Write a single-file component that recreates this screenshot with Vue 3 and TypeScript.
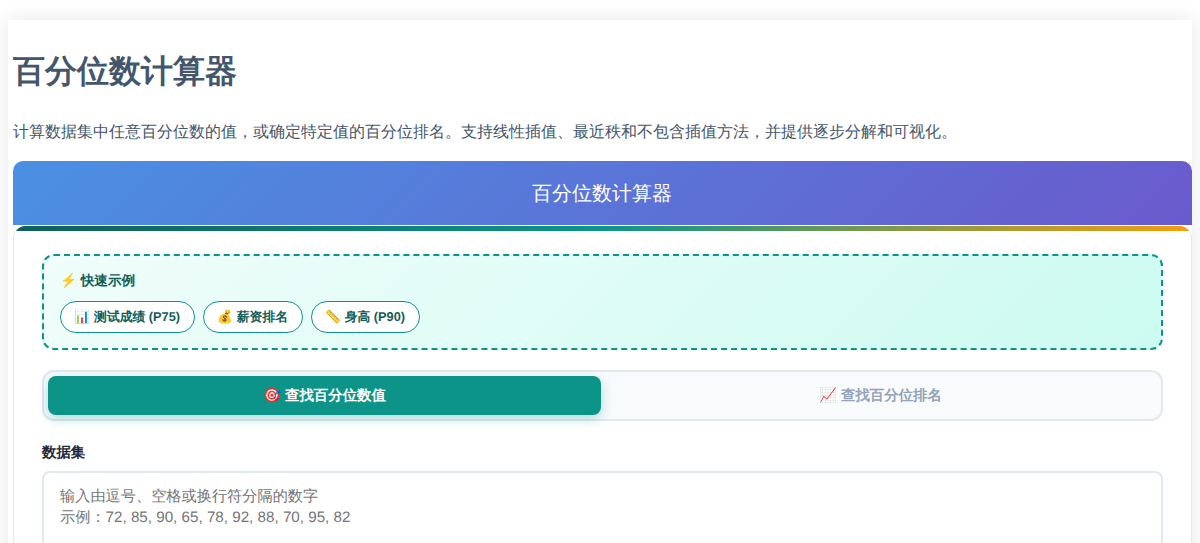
<script setup lang="ts">
import { ref } from 'vue'

type Mode = 'value' | 'rank'

const mode = ref<Mode>('value')
const data = ref('')
const examples: string[] = ['📊 测试成绩 (P75)', '💰 薪资排名', '📏 身高 (P90)']
const placeholder = '输入由逗号、空格或换行符分隔的数字\n示例：72, 85, 90, 65, 78, 92, 88, 70, 95, 82'
</script>

<template>
  <div class="page">
    <main class="container">
      <h1 class="title">百分位数计算器</h1>
      <p class="intro">计算数据集中任意百分位数的值，或确定特定值的百分位排名。支持线性插值、最近秩和不包含插值方法，并提供逐步分解和可视化。</p>
      <header class="banner">百分位数计算器</header>
      <section class="card">
        <div class="examples">
          <div class="examples-title">⚡ 快速示例</div>
          <div class="chips">
            <button v-for="e in examples" :key="e" class="chip" type="button">{{ e }}</button>
          </div>
        </div>
        <div class="tabs">
          <button class="tab" :class="{ active: mode === 'value' }" type="button" @click="mode = 'value'">🎯 查找百分位数值</button>
          <button class="tab" :class="{ active: mode === 'rank' }" type="button" @click="mode = 'rank'">📈 查找百分位排名</button>
        </div>
        <label class="label" for="dataset">数据集</label>
        <textarea id="dataset" v-model="data" class="input" :placeholder="placeholder"></textarea>
      </section>
    </main>
  </div>
</template>

<style>
html, body {
  margin: 0;
  background: #fff;
  overflow: hidden;
}
</style>

<style scoped>
.page {
  padding: 20px 8px 0;
  font-family: "Liberation Sans", sans-serif;
  text-rendering: geometricPrecision;
}
.container {
  background: #fff;
  padding: 0 0 20px 5px;
  box-shadow: 0 0 20px rgba(0, 0, 0, 0.1);
}
.title {
  margin: 0;
  padding-top: 29px;
  font-size: 32px;
  line-height: 44px;
  font-weight: 700;
  color: #44566c;
}
.intro {
  margin: 28px 0 0;
  font-size: 16px;
  line-height: 24px;
  color: #44566c;
}
.banner {
  box-sizing: border-box;
  margin-top: 16px;
  height: 64px;
  padding: 1px 1px 0 0;
  line-height: 64px;
  text-align: center;
  font-size: 20px;
  color: #fff;
  border-radius: 10px 10px 0 0;
  background: linear-gradient(135deg, #4a90e2, #6a5acd);
}
.card {
  position: relative;
  margin-top: 1px;
  padding: 28px 28px 28px;
  background: #fff;
  border: 1px solid #e2e8f0;
  border-top: 0;
  border-radius: 12px;
  overflow: hidden;
}
.card::before {
  content: "";
  position: absolute;
  top: 0;
  left: 0;
  right: 0;
  height: 5px;
  background: linear-gradient(90deg, #115e59, #0d9488, #f59e0b);
}
.examples {
  padding: 16px 16px 15px;
  border: 2px dashed #0d9488;
  border-radius: 12px;
  background: linear-gradient(135deg, #f0fdfa, #ccfbf1);
}
.examples-title {
  font-size: 13.6px;
  line-height: 18px;
  font-weight: 700;
  color: #115e59;
}
.chips {
  display: flex;
  gap: 8px;
  margin-top: 11px;
}
.chip {
  height: 32px;
  padding: 0 13.6px;
  font: 700 12.8px "Liberation Sans", sans-serif;
  text-rendering: geometricPrecision;
  color: #115e59;
  background: #fff;
  border: 1px solid #0d9488;
  border-radius: 20px;
}
.tabs {
  display: flex;
  gap: 3px;
  margin-top: 20px;
  padding: 4px;
  background: #f8fafc;
  border: 2px solid #e2e8f0;
  border-radius: 12px;
}
.tab {
  flex: 1;
  height: 39px;
  padding: 1px 0 0;
  font: 700 14.4px "Liberation Sans", sans-serif;
  text-rendering: geometricPrecision;
  color: #94a3b8;
  background: transparent;
  border: 0;
  border-radius: 8px;
}
.tab.active {
  color: #fff;
  background: #0d9488;
  box-shadow: 0 4px 12px rgba(13, 148, 136, 0.3);
}
.label {
  display: block;
  margin-top: 22px;
  font-size: 14.4px;
  line-height: 20px;
  font-weight: 700;
  color: #1e293b;
}
.input {
  display: block;
  box-sizing: border-box;
  width: 100%;
  height: 140px;
  margin-top: 8px;
  padding: 13px 16px;
  font: 15.2px/21px "Liberation Sans", sans-serif;
  text-rendering: geometricPrecision;
  color: #1e293b;
  border: 2px solid #e2e8f0;
  border-radius: 8px;
  outline: none;
  resize: vertical;
}
</style>
